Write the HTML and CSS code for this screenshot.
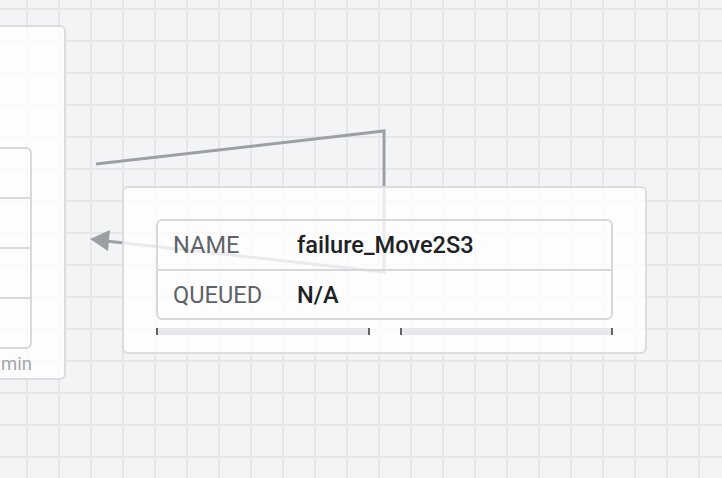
FILE: index.html
```html
<!DOCTYPE html>
<html>
<head>
<meta charset="utf-8">
<link rel="stylesheet" href="styles.css">
</head>
<body>
<div class="canvas">
  <svg class="edges" width="722" height="478" viewBox="0 0 722 478">
    <polyline points="96,164 384,131 384,272 106,241" fill="none" stroke="#9aa0a6" stroke-width="3" stroke-linejoin="miter"/>
    <polygon points="90,239 110,230 108,251" fill="#9aa0a6"/>
  </svg>

  <div class="node node-left">
    <div class="table">
      <div class="row"></div>
      <div class="row"></div>
      <div class="row"></div>
      <div class="row"></div>
    </div>
    <div class="unit">min</div>
  </div>

  <div class="node node-right">
    <div class="table">
      <div class="row">
        <span class="label">NAME</span>
        <span class="value">failure_Move2S3</span>
      </div>
      <div class="row">
        <span class="label">QUEUED</span>
        <span class="value">N/A</span>
      </div>
    </div>
    <div class="bars">
      <div class="bar"></div>
      <div class="bar"></div>
    </div>
  </div>
</div>
</body>
</html>
```

FILE: styles.css
```css
html, body {
  margin: 0;
  padding: 0;
  overflow: hidden;
}

body {
  font-family: Roboto, "Liberation Sans", sans-serif;
}

.canvas {
  position: relative;
  width: 722px;
  height: 478px;
  background-color: #f3f4f6;
  background-image:
    linear-gradient(to right, #e6e7ea 2px, transparent 2px),
    linear-gradient(to bottom, #e6e7ea 2px, transparent 2px);
  background-size: 32px 32px;
  background-position: 26px 8px;
  overflow: hidden;
}

.edges {
  position: absolute;
  left: 0;
  top: 0;
}

.node {
  position: absolute;
  box-sizing: border-box;
  background: rgba(255, 255, 255, 0.78);
  border: 2px solid #dcdcdf;
  border-radius: 6px;
}

.table {
  border: 2px solid #d8d8db;
  border-radius: 6px;
}

.row {
  display: flex;
  align-items: center;
  height: 48px;
}

.row + .row {
  border-top: 2px solid #d8d8db;
}

.node-left {
  left: -400px;
  top: 25px;
  width: 466px;
  height: 355px;
  padding: 120px 32px 0 34px;
}

.node-left .row {
  height: 48px;
}

.unit {
  text-align: right;
  font-size: 18.5px;
  color: #a3a6ab;
  margin-top: 4px;
  margin-right: 0;
  line-height: 22px;
}

.node-right {
  left: 122px;
  top: 186px;
  width: 525px;
  height: 168px;
  padding: 31px 32px 0 32px;
}

.node-right .row:first-child {
  height: 48px;
}

.node-right .row + .row {
  height: 47px;
}

.label {
  box-sizing: border-box;
  width: 139px;
  padding-left: 15px;
  font-size: 23.6px;
  color: #5f6368;
}

.value {
  font-size: 23.6px;
  font-weight: 500;
  color: #202124;
}

.bars {
  display: flex;
  gap: 30px;
  margin-top: 8px;
}

.bar {
  flex: 1;
  height: 7px;
  background: #e8e8ea;
  border-left: 2px solid #5f6368;
  border-right: 2px solid #5f6368;
}
```
